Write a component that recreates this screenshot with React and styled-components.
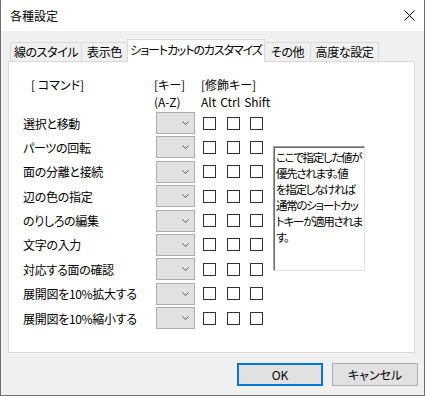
import React from "react";
import styled, { createGlobalStyle } from "styled-components";

const commands = [
  "選択と移動",
  "パーツの回転",
  "面の分離と接続",
  "辺の色の指定",
  "のりしろの編集",
  "文字の入力",
  "対応する面の確認",
  "展開図を10%拡大する",
  "展開図を10%縮小する",
];

const tabs = [
  { label: "線のスタイル", width: 72 },
  { label: "表示色", width: 47 },
  { label: "ショートカットのカスタマイズ", width: 138, active: true },
  { label: "その他", width: 47 },
  { label: "高度な設定", width: 69 },
];

export default function App() {
  return (
    <>
      <GlobalStyle />
      <Window>
        <TitleBar>
          <Title>各種設定</Title>
          <svg width="11" height="11" viewBox="0 0 11 11">
            <path d="M0.5 0.5 L10.5 10.5 M10.5 0.5 L0.5 10.5" stroke="#000" strokeWidth="1" fill="none" />
          </svg>
        </TitleBar>
        <Body>
          <TabRow>
            {tabs.map((t) => (
              <Tab key={t.label} $width={t.width} $active={t.active}>
                {t.label}
              </Tab>
            ))}
          </TabRow>
          <Panel>
            <Table>
              <Header>
                <HeadLabel>[ コマンド]</HeadLabel>
                <HeadKey>
                  <span>[キー]</span>
                  <span>(A-Z)</span>
                </HeadKey>
                <HeadMods>
                  <span>[修飾キー]</span>
                  <ModNames>
                    <span>Alt</span>
                    <span>Ctrl</span>
                    <span>Shift</span>
                  </ModNames>
                </HeadMods>
              </Header>
              <Rows>
                {commands.map((c) => (
                  <Row key={c}>
                    <Label>{c}</Label>
                    <Select>
                      <svg width="7" height="4" viewBox="0 0 7 4">
                        <path d="M0.5 0.5 L3.5 3.5 L6.5 0.5" stroke="#505050" strokeWidth="1" fill="none" />
                      </svg>
                    </Select>
                    <Checks>
                      <Check />
                      <Check />
                      <Check />
                    </Checks>
                  </Row>
                ))}
              </Rows>
            </Table>
            <Note>
              ここで指定した値が<br />
              優先されます。値<br />
              を指定しなければ<br />
              通常のショートカッ<br />
              トキーが適用されま<br />
              す。
            </Note>
          </Panel>
          <Footer>
            <Button $primary>OK</Button>
            <Button>キャンセル</Button>
          </Footer>
        </Body>
      </Window>
    </>
  );
}

const GlobalStyle = createGlobalStyle`
  html, body {
    margin: 0;
    background: #ffffff;
  }
  body {
    font-family: "Noto Sans CJK JP", "Noto Sans", sans-serif;
    font-size: 12px;
    font-feature-settings: "palt";
    color: #000000;
  }
  * { box-sizing: border-box; }
`;

const Window = styled.div`
  width: 425px;
  height: 396px;
  display: flex;
  flex-direction: column;
  background: #f0f0f0;
  border: 1px solid #6e6e6e;
  border-top: none;
`;

const TitleBar = styled.div`
  height: 31px;
  background: #ffffff;
  display: flex;
  align-items: center;
  justify-content: space-between;
  padding: 0 9px 1px 9px;
`;

const Title = styled.div`
  font-size: 12px;
`;

const Body = styled.div`
  flex: 1;
  display: flex;
  flex-direction: column;
  padding: 8px 8px 0 7px;
`;

const TabRow = styled.div`
  display: flex;
  align-items: flex-end;
  height: 22px;
  padding-left: 2px;
  position: relative;
  z-index: 1;
`;

const Tab = styled.div`
  width: ${(p) => p.$width}px;
  height: ${(p) => (p.$active ? 23 : 19)}px;
  margin-left: -1px;
  margin-bottom: ${(p) => (p.$active ? -1 : 0)}px;
  background: ${(p) => (p.$active ? "#ffffff" : "#f0f0f0")};
  border: 1px solid #d9d9d9;
  border-bottom: none;
  display: flex;
  justify-content: center;
  align-items: ${(p) => (p.$active ? "flex-start" : "center")};
  padding-top: ${(p) => (p.$active ? 2 : 0)}px;
  white-space: nowrap;
  line-height: 16px;
  letter-spacing: ${(p) => (p.$active ? -1.1 : -0.4)}px;
  &:first-child { margin-left: 0; }
`;

const Panel = styled.div`
  width: 407px;
  height: 292px;
  background: #ffffff;
  border: 1px solid #d9d9d9;
  display: flex;
  align-items: flex-start;
  padding: 14px 0 0 14px;
`;

const Table = styled.div`
  width: 240px;
  display: flex;
  flex-direction: column;
`;

const Header = styled.div`
  display: flex;
  line-height: 17px;
  margin-bottom: 2px;
  white-space: nowrap;
`;

const HeadLabel = styled.div`
  width: 131px;
  padding-left: 8px;
`;

const HeadKey = styled.div`
  width: 47px;
  display: flex;
  flex-direction: column;
`;

const HeadMods = styled.div`
  width: 62px;
  display: flex;
  flex-direction: column;
`;

const ModNames = styled.div`
  display: flex;
  gap: 4px;
`;

const Rows = styled.div`
  display: flex;
  flex-direction: column;
  gap: 2.4px;
`;

const Row = styled.div`
  display: flex;
  align-items: center;
  height: 22px;
`;

const Label = styled.div`
  width: 133px;
  white-space: nowrap;
  letter-spacing: -0.3px;
`;

const Select = styled.div`
  width: 39px;
  height: 22px;
  background: #e1e1e1;
  border: 1px solid #adadad;
  display: flex;
  align-items: center;
  justify-content: flex-end;
  padding-right: 5px;
`;

const Checks = styled.div`
  display: flex;
  gap: 10.5px;
  margin-left: 8px;
`;

const Check = styled.div`
  width: 13px;
  height: 13px;
  border: 1px solid #333333;
  background: #ffffff;
`;

const Note = styled.div`
  width: 92px;
  height: 125px;
  margin: 70px 0 0 10px;
  border: 1px solid;
  border-color: #a0a0a0 #e3e3e3 #e3e3e3 #a0a0a0;
  box-shadow: inset 1px 1px 0 #696969;
  padding: 2px 0 0 2px;
  font-size: 11.5px;
  line-height: 16px;
  letter-spacing: -1.3px;
  white-space: nowrap;
  overflow: hidden;
`;

const Footer = styled.div`
  display: flex;
  justify-content: flex-end;
  gap: 9px;
  margin: 10px -2px 0 0;
`;

const Button = styled.div`
  width: 86px;
  height: 23px;
  background: #e1e1e1;
  border: ${(p) => (p.$primary ? "2px solid #0078d7" : "1px solid #adadad")};
  display: flex;
  align-items: center;
  justify-content: center;
  font-size: 12px;
`;
